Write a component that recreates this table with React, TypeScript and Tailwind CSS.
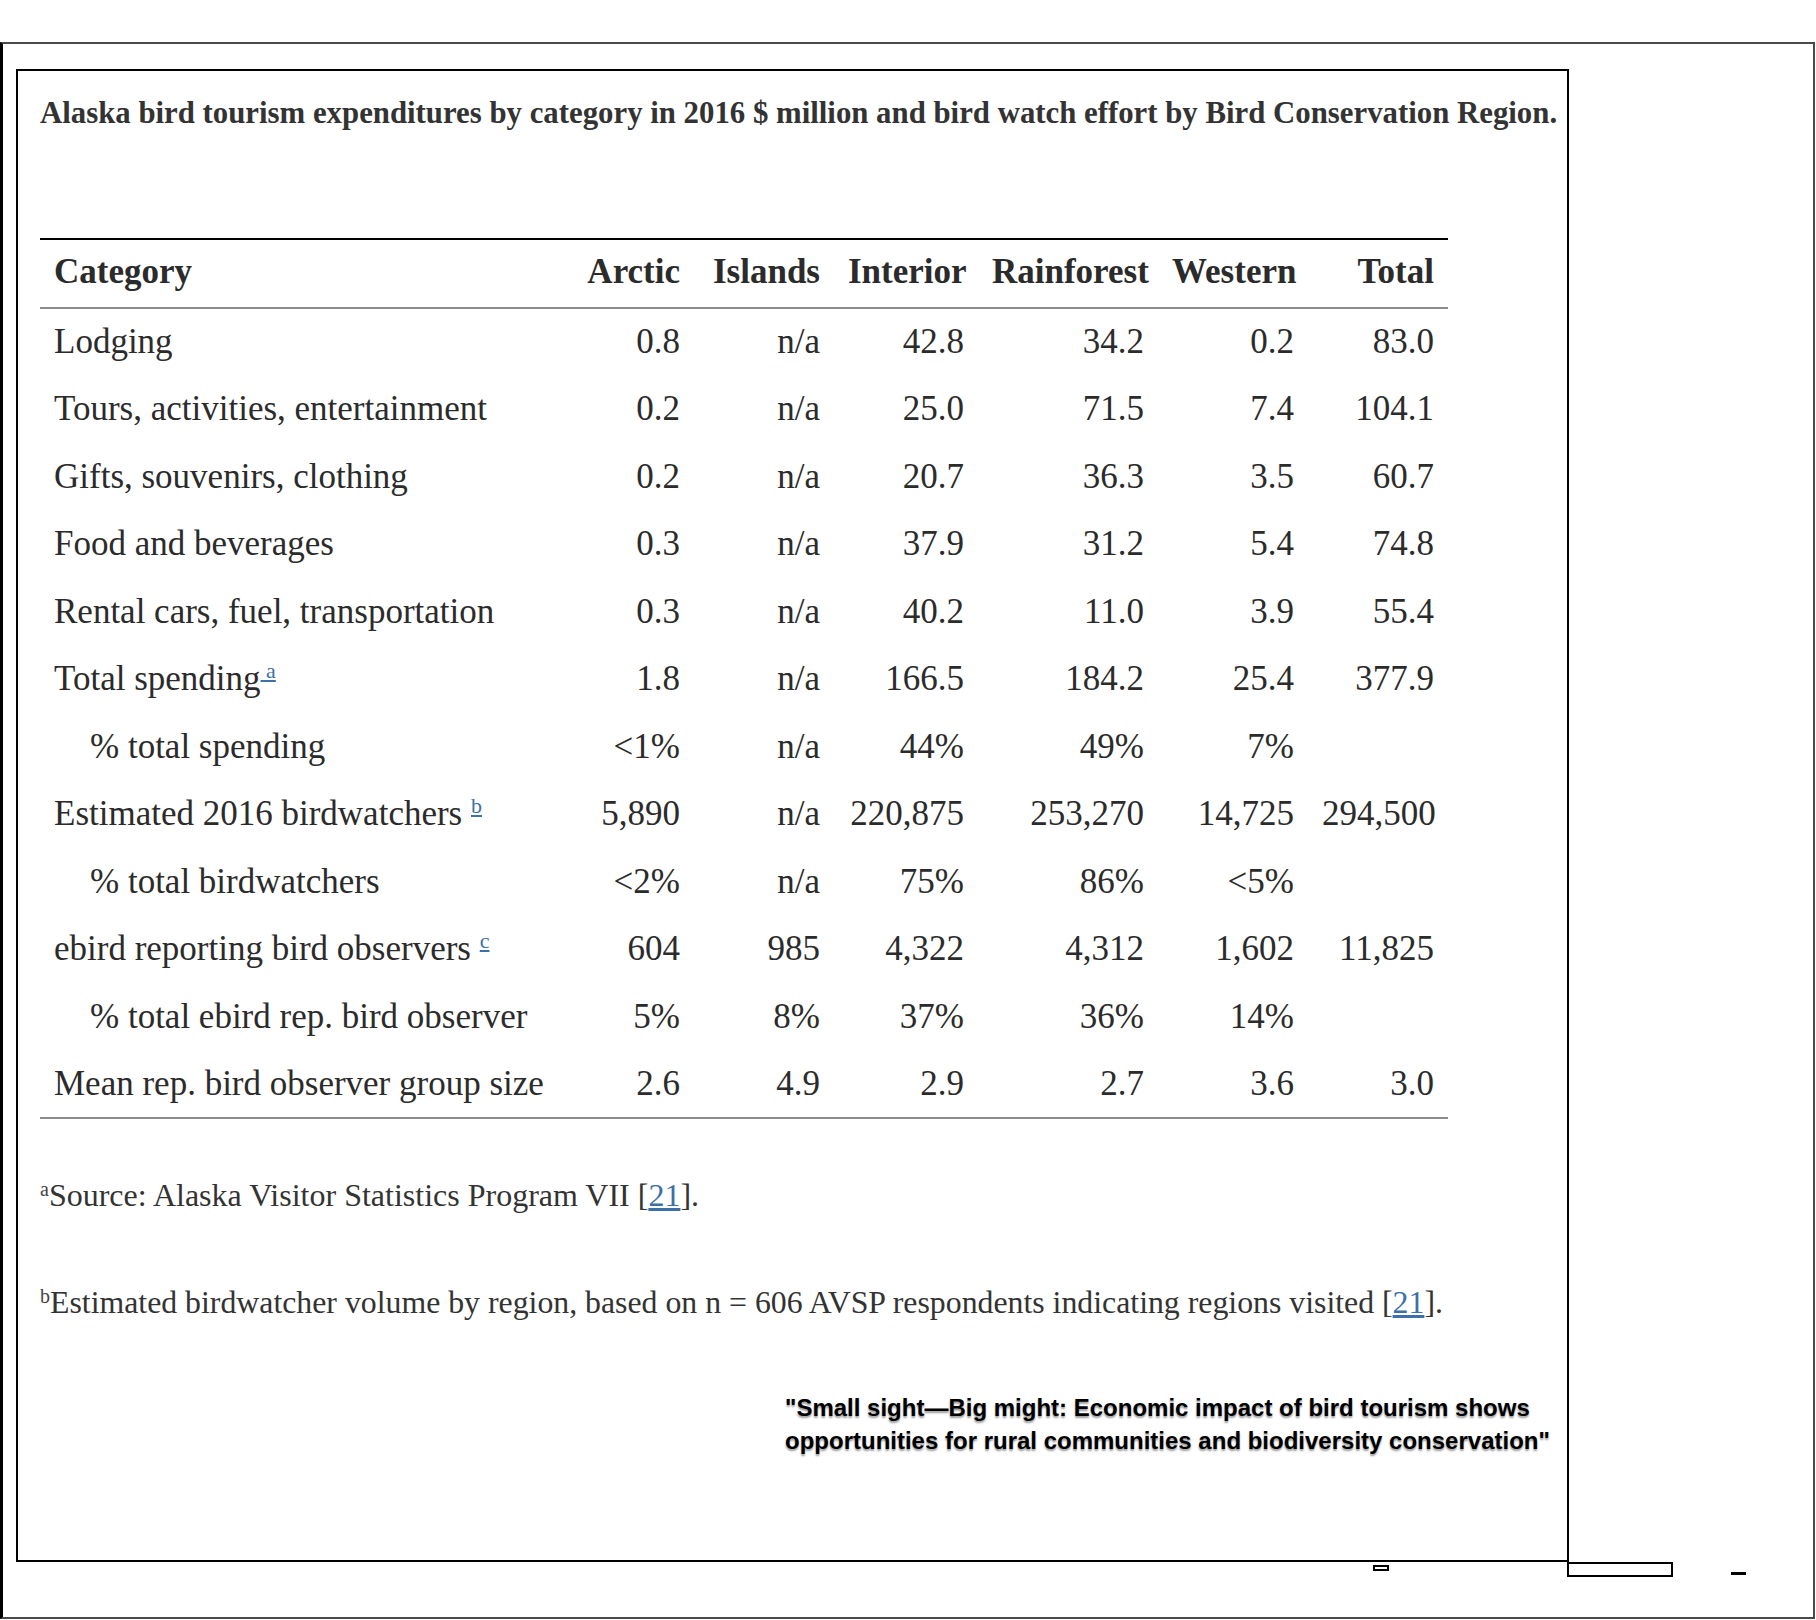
const rows = [
  { label: 'Lodging', vals: ['0.8', 'n/a', '42.8', '34.2', '0.2', '83.0'] },
  { label: 'Tours, activities, entertainment', vals: ['0.2', 'n/a', '25.0', '71.5', '7.4', '104.1'] },
  { label: 'Gifts, souvenirs, clothing', vals: ['0.2', 'n/a', '20.7', '36.3', '3.5', '60.7'] },
  { label: 'Food and beverages', vals: ['0.3', 'n/a', '37.9', '31.2', '5.4', '74.8'] },
  { label: 'Rental cars, fuel, transportation', vals: ['0.3', 'n/a', '40.2', '11.0', '3.9', '55.4'] },
  { label: 'Total spending', note: 'a', noteSpace: 'inside', vals: ['1.8', 'n/a', '166.5', '184.2', '25.4', '377.9'] },
  { label: '% total spending', indent: true, vals: ['<1%', 'n/a', '44%', '49%', '7%', ''] },
  { label: 'Estimated 2016 birdwatchers', note: 'b', vals: ['5,890', 'n/a', '220,875', '253,270', '14,725', '294,500'] },
  { label: '% total birdwatchers', indent: true, vals: ['<2%', 'n/a', '75%', '86%', '<5%', ''] },
  { label: 'ebird reporting bird observers', note: 'c', vals: ['604', '985', '4,322', '4,312', '1,602', '11,825'] },
  { label: '% total ebird rep. bird observer', indent: true, vals: ['5%', '8%', '37%', '36%', '14%', ''] },
  { label: 'Mean rep. bird observer group size', vals: ['2.6', '4.9', '2.9', '2.7', '3.6', '3.0'] },
];

const headers = ['Arctic', 'Islands', 'Interior', 'Rainforest', 'Western', 'Total'];

function NoteLink({ letter, spaceInside }: { letter: string; spaceInside?: boolean }) {
  return (
    <>
      {!spaceInside && ' '}
      <a href="#" className="text-[#3d6fa8] underline text-[22px] align-[0.55em] leading-none">
        {spaceInside ? '\u00a0' + letter : letter}
      </a>
    </>
  );
}

export default function App() {
  return (
    <div className="w-[1816px] h-[1620px] bg-white pt-[42px] font-['Liberation_Serif',serif] text-[#2b2b2b]">
      {/* outer frame */}
      <div className="w-[1815px] h-[1577px] border-2 border-[#4a4a4a] border-l-[3px] border-l-black">
        <div className="ml-[13px] mt-[25px] w-[1553px] h-[1493px] border-2 border-black pl-[22px] pt-[24px]">
          <h1 className="text-[30.8px] leading-[36px] font-bold text-[#333] whitespace-nowrap">
            Alaska bird tourism expenditures by category in 2016 $ million and bird watch effort by Bird Conservation Region.
          </h1>

          <table className="mt-[107px] w-[1408px] table-fixed border-collapse text-[35px] leading-[40px]">
            <colgroup>
              <col className="w-[526px]" />
              <col className="w-[128px]" />
              <col className="w-[140px]" />
              <col className="w-[144px]" />
              <col className="w-[180px]" />
              <col className="w-[150px]" />
              <col className="w-[140px]" />
            </colgroup>
            <thead>
              <tr className="h-[69px] border-t-2 border-t-black border-b-2 border-b-[#8c8c8c]">
                <th className="px-[14px] pb-[4px] text-left font-bold">Category</th>
                {headers.map((h) => (
                  <th key={h} className="px-[14px] pb-[4px] text-right font-bold whitespace-nowrap">
                    {h}
                  </th>
                ))}
              </tr>
            </thead>
            <tbody className="border-b-2 border-b-[#8c8c8c]">
              {rows.map((r) => (
                <tr key={r.label} className="h-[67.5px]">
                  <td className={`${r.indent ? 'pl-[50px]' : 'pl-[14px]'} pr-[14px] whitespace-nowrap`}>
                    {r.label}
                    {r.note && <NoteLink letter={r.note} spaceInside={r.noteSpace === 'inside'} />}
                  </td>
                  {r.vals.map((v, i) => (
                    <td key={i} className="px-[14px] text-right whitespace-nowrap">
                      {v}
                    </td>
                  ))}
                </tr>
              ))}
            </tbody>
          </table>

          {/* footnotes */}
          <p className="mt-[56px] text-[32px] leading-[40px] text-[#333]">
            <sup className="text-[20px] text-[#444]">a</sup>Source: Alaska Visitor Statistics Program VII [
            <a href="#" className="text-[#3d6fa8] underline">21</a>].
          </p>
          <p className="mt-[68px] text-[31.8px] leading-[40px] text-[#333] whitespace-nowrap">
            <sup className="text-[20px] text-[#444]">b</sup>Estimated birdwatcher volume by region, based on n = 606 AVSP respondents indicating regions visited [
            <a href="#" className="text-[#3d6fa8] underline">21</a>].
          </p>

          <p className="mt-[68px] ml-[745px] text-[24px] leading-[33px] font-bold font-['Liberation_Sans',Arial,sans-serif] text-black [text-shadow:0_2px_2px_rgba(0,0,0,0.4)]">
            "Small sight—Big might: Economic impact of bird tourism shows
            <br />
            opportunities for rural communities and biodiversity conservation"
          </p>
        </div>

        {/* stray controls below the card */}
        <div className="flex items-start">
          <div className="ml-[1370px] mt-[3px] w-[16px] h-[6px] border-2 border-black" />
          <div className="ml-[178px] w-[106px] h-[15px] border-2 border-black" />
          <div className="ml-[58px] mt-[10px] w-[15px] h-[3px] bg-black" />
        </div>
      </div>
    </div>
  );
}
